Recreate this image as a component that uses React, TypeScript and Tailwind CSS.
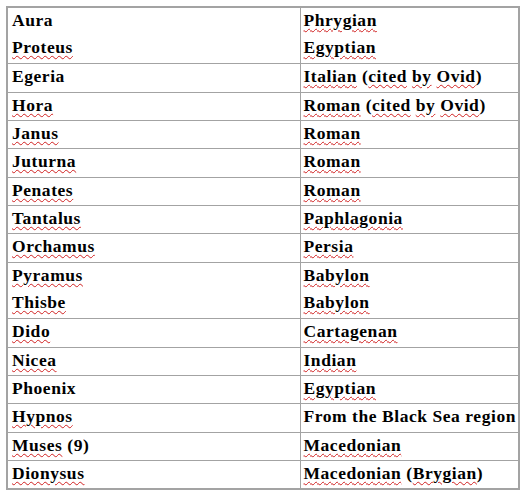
const rows: { name: string; origin: string; noLine?: boolean }[] = [
  { name: "Aura", origin: "Phrygian*", noLine: true },
  { name: "Proteus*", origin: "Egyptian*" },
  { name: "Egeria", origin: "Italian* (cited* by* Ovid*)" },
  { name: "Hora*", origin: "Roman* (cited* by* Ovid*)" },
  { name: "Janus*", origin: "Roman*" },
  { name: "Juturna*", origin: "Roman*" },
  { name: "Penates*", origin: "Roman*" },
  { name: "Tantalus*", origin: "Paphlagonia*" },
  { name: "Orchamus*", origin: "Persia*" },
  { name: "Pyramus*", origin: "Babylon*", noLine: true },
  { name: "Thisbe*", origin: "Babylon*" },
  { name: "Dido*", origin: "Cartagenan*" },
  { name: "Nicea*", origin: "Indian*" },
  { name: "Phoenix", origin: "Egyptian*" },
  { name: "Hypnos*", origin: "From the Black Sea region" },
  { name: "Muses* (9)", origin: "Macedonian*" },
  { name: "Dionysus*", origin: "Macedonian* (Brygian*)" },
];

// a word marked with * gets the red spell-check squiggle (brackets stay outside it)
function Words({ text }: { text: string }) {
  const parts = text.split(" ");
  return (
    <>
      {parts.map((w, i) => {
        const m = w.match(/^(\(?)([^*()]+)\*(\)?)$/);
        return (
          <span key={i}>
            {i > 0 && " "}
            {m ? (
              <>
                {m[1]}
                <span className="underline decoration-wavy decoration-[#d02020] decoration-[1px] underline-offset-[2px]">
                  {m[2]}
                </span>
                {m[3]}
              </>
            ) : (
              w
            )}
          </span>
        );
      })}
    </>
  );
}

export default function App() {
  return (
    <div className="min-h-screen bg-white pl-[6px] pt-[6px]">
      <table
        className="w-[514px] border-collapse border-2 border-[#a3a3a3] text-[17.5px] font-bold leading-[18px] tracking-[0.55px] text-black"
        style={{ fontFamily: '"Liberation Serif", "Times New Roman", serif' }}
      >
        <tbody>
          {rows.map((r) => (
            <tr key={r.name} className={`h-[28.35px] ${r.noLine ? "" : "border-b border-[#a3a3a3]"}`}>
              <td className="w-[293px] border-r border-[#a3a3a3] pl-[4px] pt-[3px] align-top">
                <Words text={r.name} />
              </td>
              <td className="pl-[3px] pt-[3px] align-top whitespace-nowrap">
                <Words text={r.origin} />
              </td>
            </tr>
          ))}
        </tbody>
      </table>
    </div>
  );
}
